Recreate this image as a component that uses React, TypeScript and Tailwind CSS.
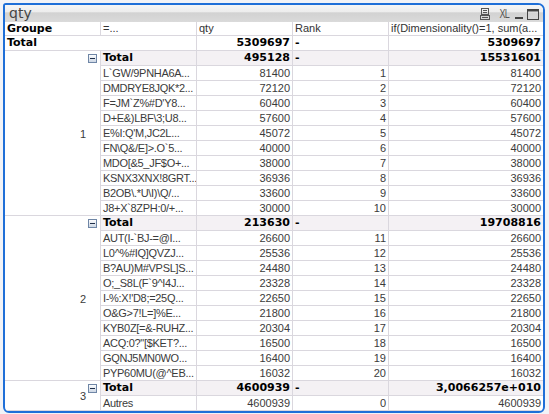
const sans = "font-['Liberation_Sans',Arial,sans-serif]";
const bold = "font-['DejaVu_Sans',Verdana,sans-serif] font-bold text-black";
const line = 'border-[#dad7de]';

type Row = [string, string, string, string];

const groups: { id: string; total: [string, string]; rows: Row[] }[] = [
  {
    id: '1',
    total: ['495128', '15531601'],
    rows: [
      ['L`GW/9PNHA6A...', '81400', '1', '81400'],
      ['DMDRYE8JQK*2...', '72120', '2', '72120'],
      ["F=JM`Z%#D'Y8...", '60400', '3', '60400'],
      ['D+E&)LBF\\3;U8...', '57600', '4', '57600'],
      ["E%I:Q'M,JC2L...", '45072', '5', '45072'],
      ['FN\\Q&/E]>.O`5...', '40000', '6', '40000'],
      ['MDO[&5_JF$O+...', '38000', '7', '38000'],
      ['KSNX3XNX!8GRT...', '36936', '8', '36936'],
      ['B2OB\\.*U\\I)\\Q/...', '33600', '9', '33600'],
      ['J8+X`8ZPH:0/+...', '30000', '10', '30000'],
    ],
  },
  {
    id: '2',
    total: ['213630', '19708816'],
    rows: [
      ['AUT(I-`BJ-=@I...', '26600', '11', '26600'],
      ['L0^%#IQ]QVZJ...', '25536', '12', '25536'],
      ['B?AU)M#VPSL]S...', '24480', '13', '24480'],
      ['O;_S8L(F`9^I4J...', '23328', '14', '23328'],
      ["I-%:X!'D8;=25Q...", '22650', '15', '22650'],
      ['O&G>7!L=]%E...', '21800', '16', '21800'],
      ['KYB0Z[=&-RUHZ...', '20304', '17', '20304'],
      ['ACQ:0?"[$KET?...', '16500', '18', '16500'],
      ['GQNJ5MN0WO...', '16400', '19', '16400'],
      ['PYP60MU(@^EB...', '16032', '20', '16032'],
    ],
  },
  {
    id: '3',
    total: ['4600939', '3,0066257e+010'],
    rows: [['Autres', '4600939', '0', '4600939']],
  },
];

function Minus() {
  return (
    <svg width="9" height="9" viewBox="0 0 9 9" className="absolute right-[3px] top-[3px]">
      <defs>
        <linearGradient id="mg" x1="0" y1="0" x2="0" y2="1">
          <stop offset="0" stopColor="#ffffff" />
          <stop offset="1" stopColor="#c9d4e2" />
        </linearGradient>
      </defs>
      <rect x="0.5" y="0.5" width="8" height="8" fill="url(#mg)" stroke="#6f86a6" />
      <rect x="2" y="4" width="5" height="1" fill="#1f2f4a" />
    </svg>
  );
}

function TitleIcons() {
  return (
    <div className="flex items-center gap-[3px] pr-[4px] text-[#555]">
      <svg width="10" height="12" viewBox="0 0 10 12" className="mr-[5px]">
        <rect x="1.5" y="0.5" width="7" height="6" fill="none" stroke="#555" />
        <rect x="3" y="2" width="4" height="1" fill="#555" />
        <rect x="3" y="4" width="4" height="1" fill="#555" />
        <rect x="0.5" y="7.5" width="9" height="4" fill="none" stroke="#555" />
        <rect x="2" y="9" width="6" height="1" fill="#555" />
      </svg>
      <span className={`${sans} text-[12px] leading-none tracking-[-1px] scale-x-75`}>XL</span>
      <svg width="10" height="12" viewBox="0 0 10 12">
        <rect x="1" y="9" width="8" height="2" fill="#444" />
      </svg>
      <svg width="12" height="12" viewBox="0 0 12 12">
        <rect x="0.5" y="1.5" width="11" height="10" fill="none" stroke="#444" />
        <rect x="0.5" y="1.5" width="11" height="2" fill="#444" />
      </svg>
    </div>
  );
}

function DataRow({ r }: { r: Row }) {
  return (
    <div className={`flex h-[15px] border-b ${line} text-[11px] leading-[14px] text-[#3b3b3b] ${sans}`}>
      <div className={`w-[96px] border-r ${line} pl-[2px] tracking-[-0.3px] whitespace-nowrap overflow-hidden`}>{r[0]}</div>
      <div className={`w-[96px] border-r ${line} pr-[2px] text-right`}>{r[1]}</div>
      <div className={`w-[96px] border-r ${line} pr-[2px] text-right`}>{r[2]}</div>
      <div className="flex-1 pr-[2px] text-right">{r[3]}</div>
    </div>
  );
}

export default function App() {
  return (
    <div className="w-[549px] h-[414px] bg-[#f2f3f7] pt-[3px] pl-[3px]">
      <div className="w-[542px] h-[410px] border-2 border-[#1f6fd8] rounded-tl-[3px] rounded-tr-[7px] rounded-b-[6px] overflow-hidden bg-white flex flex-col">
        <div className="h-[17px] shrink-0 flex items-center justify-between bg-[linear-gradient(to_bottom,#f6f6f6_0%,#ededed_40%,#d2d2d2_46%,#dadada_100%)]">
          <span className="pl-[4px] font-['DejaVu_Sans',Verdana,sans-serif] text-[14px] leading-none text-[#444] -mt-[1px]">qty</span>
          <TitleIcons />
        </div>

        <div className={`flex h-[14px] shrink-0 border-b ${line} text-[11px] leading-[13px] text-[#333]`}>
          <div className={`w-[96px] border-r ${line} pl-[2px] ${bold}`}>Groupe</div>
          <div className={`w-[96px] border-r ${line} pl-[2px] ${sans}`}>=...</div>
          <div className={`w-[96px] border-r ${line} pl-[2px] ${sans}`}>qty</div>
          <div className={`w-[96px] border-r ${line} pl-[2px] ${sans}`}>Rank</div>
          <div className={`flex-1 pl-[2px] whitespace-nowrap overflow-hidden ${sans}`}>if(Dimensionality()=1, sum(a...</div>
        </div>

        <div className={`flex h-[15px] shrink-0 border-b ${line} text-[11px] leading-[14px] ${bold}`}>
          <div className={`w-[192px] border-r ${line} pl-[2px]`}>Total</div>
          <div className={`w-[96px] border-r ${line} pr-[2px] text-right`}>5309697</div>
          <div className={`w-[96px] border-r ${line} pl-[2px]`}>-</div>
          <div className="flex-1 pr-[2px] text-right">5309697</div>
        </div>

        {groups.map((g) => (
          <div key={g.id} className={`flex shrink-0 border-b ${line}`}>
            <div className={`relative w-[96px] border-r ${line} flex items-center justify-end pr-[14px] pt-[2px] text-[11px] text-[#3b3b3b] ${sans}`}>
              {g.id}
              <Minus />
            </div>
            <div className="flex-1 flex flex-col [&>*:last-child]:border-b-0 [&>*:last-child]:h-[14px]">
              <div className={`flex h-[15px] border-b ${line} bg-[#f4f1f4] text-[11px] leading-[14px] ${bold}`}>
                <div className={`w-[96px] border-r ${line} pl-[2px]`}>Total</div>
                <div className={`w-[96px] border-r ${line} pr-[2px] text-right`}>{g.total[0]}</div>
                <div className={`w-[96px] border-r ${line} pl-[2px]`}>-</div>
                <div className="flex-1 pr-[2px] text-right whitespace-nowrap">{g.total[1]}</div>
              </div>
              {g.rows.map((r) => (
                <DataRow key={r[2]} r={r} />
              ))}
            </div>
          </div>
        ))}
      </div>
    </div>
  );
}
